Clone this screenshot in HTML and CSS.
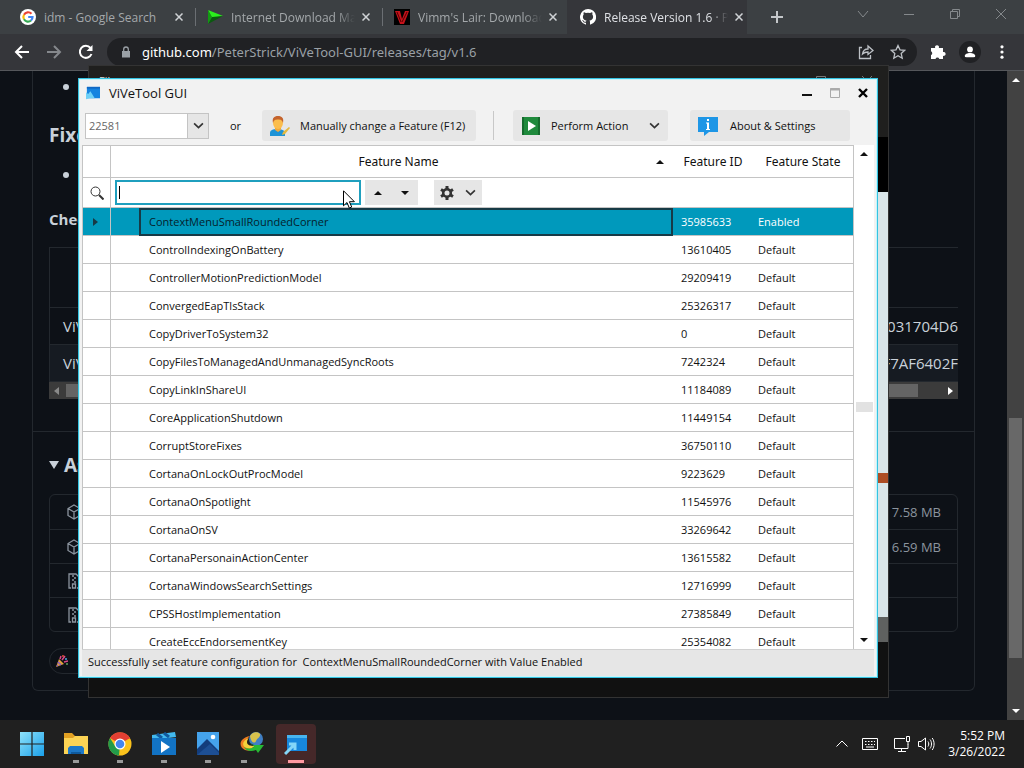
FILE: index.html
```html
<!DOCTYPE html>
<html lang="en">
<head>
  <meta charset="UTF-8">
  <meta name="viewport" content="width=device-width, initial-scale=1.0">
  <title>ViVeTool GUI</title>
  <link rel="stylesheet" href="styles.css">
</head>
<body>
  <header class="browser">
    <div class="tabs">
      <div class="tab">
        <svg class="favicon" viewBox="0 0 16 16"><circle cx="8" cy="8" r="8" fill="#fff"/><g fill="none" stroke-width="2.2"><path d="M11.5 4.8A4.6 4.6 0 0 0 4 5.7" stroke="#ea4335"/><path d="M4 5.7a4.6 4.6 0 0 0 0 4.6" stroke="#fbbc05"/><path d="M4 10.3a4.6 4.6 0 0 0 7 1.2" stroke="#34a853"/><path d="M8.2 8h4.3a4.6 4.6 0 0 1-1.5 3.5" stroke="#4285f4"/></g></svg>
        <span class="tab-title">idm - Google Search</span>
        <button class="tab-close" aria-label="Close tab"><svg viewBox="0 0 8 8"><path d="M0.5 0.5l7 7M7.5 0.5l-7 7"/></svg></button>
      </div>
      <div class="tab">
        <svg class="favicon" viewBox="0 0 16 16"><path d="M1 1l15 6-11 2z" fill="#2bf01d"/><path d="M1 15l15-8-11 1z" fill="#0b5a10"/><path d="M1 1v14l4-7z" fill="#129a12"/></svg>
        <span class="tab-title fade">Internet Download Manager</span>
        <button class="tab-close" aria-label="Close tab"><svg viewBox="0 0 8 8"><path d="M0.5 0.5l7 7M7.5 0.5l-7 7"/></svg></button>
      </div>
      <div class="tab last">
        <svg class="favicon" viewBox="0 0 16 16"><path d="M0 0h16v16H0z" fill="#000"/><path d="M1 2h5l2 8 3-8h4l-5 13H6z" fill="#c3121b"/><path d="M3 3l4 10M13 3L8 13" stroke="#500" fill="none"/></svg>
        <span class="tab-title fade">Vimm's Lair: Download</span>
        <button class="tab-close" aria-label="Close tab"><svg viewBox="0 0 8 8"><path d="M0.5 0.5l7 7M7.5 0.5l-7 7"/></svg></button>
      </div>
      <div class="tab active">
        <svg class="favicon" viewBox="0 0 16 16"><path fill="#fff" d="M8 0a8 8 0 0 0-2.5 15.6c.4.1.5-.2.5-.4v-1.500c-2.200.5-2.700-.9-2.700-.9-.4-.9-.9-1.200-.9-1.200-.7-.5.1-.5.1-.5.8.1 1.200.8 1.200.8.7 1.200 1.900.9 2.300.7.1-.5.3-.9.5-1.100-1.800-.2-3.600-.9-3.600-4 0-.9.3-1.600.8-2.100-.1-.2-.4-1 .1-2.100 0 0 .7-.2 2.200.8a7.500 7.500 0 0 1 4 0c1.500-1 2.200-.8 2.200-.8.4 1.100.2 1.900.1 2.100.5.600.8 1.300.8 2.100 0 3.100-1.900 3.800-3.700 4 .3.3.6.8.6 1.500v2.200c0 .2.1.5.6.4A8 8 0 0 0 8 0z"/></svg>
        <span class="tab-title fade">Release Version 1.6 · PeterStrick</span>
        <button class="tab-close" aria-label="Close tab"><svg viewBox="0 0 8 8"><path d="M0.5 0.5l7 7M7.5 0.5l-7 7"/></svg></button>
      </div>
      <button class="new-tab" aria-label="New tab"><svg viewBox="0 0 12 12"><path d="M6 0v12M0 6h12"/></svg></button>
      <div class="caption">
        <button aria-label="Search tabs"><svg viewBox="0 0 12 12"><path d="M1 3l5 6 5-6"/></svg></button>
        <button aria-label="Minimize"><svg viewBox="0 0 12 12"><path d="M1 6.500h10"/></svg></button>
        <button aria-label="Restore"><svg viewBox="0 0 12 12"><path d="M1.500 3.500h7v7h-7zM3.500 3.500v-2h7v7h-2"/></svg></button>
        <button aria-label="Close"><svg viewBox="0 0 12 12"><path d="M1 1l10 10M11 1L1 11"/></svg></button>
      </div>
    </div>
    <div class="toolbar">
      <button class="nav" aria-label="Back"><svg viewBox="0 0 16 16"><path d="M15 8H2M8 2L2 8l6 6"/></svg></button>
      <button class="nav off" aria-label="Forward"><svg viewBox="0 0 16 16"><path d="M1 8h13M8 2l6 6-6 6"/></svg></button>
      <button class="nav" aria-label="Reload"><svg viewBox="0 0 16 16"><path d="M13.500 10A6 6 0 1 1 12.500 4"/><path d="M14.500 1v6h-6z" fill="#fff" stroke="none"/></svg></button>
      <div class="address">
        <svg class="lock" viewBox="0 0 10 12"><path d="M1 5h8v6.500H1z" fill="#9aa0a6"/><path d="M2.700 5V3.300a2.300 2.300 0 0 1 4.600 0V5" fill="none" stroke="#9aa0a6" stroke-width="1.300"/></svg>
        <span class="url"><b>github.com</b>/PeterStrick/ViVeTool-GUI/releases/tag/v1.6</span>
        <button class="tool" aria-label="Share"><svg viewBox="0 0 16 16"><path d="M4 3.500H1.500v11h11V11M4.500 10c.5-3.500 2.500-5 5.500-5V2l5 4.500-5 4V8c-2.500 0-4 .5-5.500 2z"/></svg></button>
        <button class="tool" aria-label="Bookmark"><svg viewBox="0 0 16 16"><path d="M8 1.500l2 4.300 4.700.5-3.500 3.200 1 4.700L8 11.800l-4.200 2.400 1-4.700-3.500-3.200 4.700-.5z"/></svg></button>
      </div>
      <button class="tool" aria-label="Extensions"><svg viewBox="0 0 16 16"><path fill="#fff" stroke="none" d="M1 4h4.200a2 2 0 1 1 3.600 0H13v4a2 2 0 1 1 0 3.800V15H9.300a2 2 0 0 0-3.800 0H1v-4a2 2 0 0 0 0-3.700z"/></svg></button>
      <button class="tool profile" aria-label="Profile"><svg viewBox="0 0 16 16"><circle cx="8" cy="5" r="3.300" fill="#fff" stroke="none"/><path fill="#fff" stroke="none" d="M2 14v-1.500C2 10 5 9 8 9s6 1 6 3.500V14z"/></svg></button>
      <button class="tool menu" aria-label="Menu"><svg viewBox="0 0 16 16"><g fill="#fff" stroke="none"><circle cx="8" cy="2.800" r="1.600"/><circle cx="8" cy="8" r="1.600"/><circle cx="8" cy="13.200" r="1.600"/></g></svg></button>
    </div>
  </header>

  <main class="viewport">
    <article class="release">
      <section class="notes">
        <ul><li></li></ul>
        <h2>Fixed</h2>
        <ul><li></li></ul>
        <h3>Checksums</h3>
        <table class="sums">
          <tr><th></th><th></th></tr>
          <tr><td>ViVeTool</td><td class="hash">031704D6</td></tr>
          <tr class="alt"><td>ViVeTool</td><td class="hash">F7AF6402F</td></tr>
        </table>
        <div class="hscroll"><span class="arrow-left"></span><span class="hthumb"></span><span class="arrow-right"></span></div>
      </section>
      <section class="assets">
        <h2><span class="tri"></span>Assets</h2>
        <ul class="files">
          <li><svg viewBox="0 0 16 16"><path d="M8 1l6 3.500v7L8 15l-6-3.500v-7zM2 4.500L8 8l6-3.500M8 8v7"/></svg><span>7.58 MB</span></li>
          <li><svg viewBox="0 0 16 16"><path d="M8 1l6 3.500v7L8 15l-6-3.500v-7zM2 4.500L8 8l6-3.500M8 8v7"/></svg><span>6.59 MB</span></li>
          <li><svg viewBox="0 0 16 16"><path d="M5 15H3V1h7l3 3v11h-2M6 3h2M8 5h2M6 7h2M8 9h2M6.500 11h3v4h-3z"/></svg></li>
          <li><svg viewBox="0 0 16 16"><path d="M5 15H3V1h7l3 3v11h-2M6 3h2M8 5h2M6 7h2M8 9h2M6.500 11h3v4h-3z"/></svg></li>
        </ul>
        <button class="reaction" aria-label="Hooray">
          <svg viewBox="0 0 12 12"><path d="M0 12l3-8 5 5z" fill="#e0a03a"/><path d="M2 7l3 3M1 10l1 1" stroke="#8a5ac8" stroke-width="1.500"/><path d="M4 4l1-3M6 5l3-4M8 7l4-1" stroke="#d84a8a" stroke-width="1.500"/><circle cx="10" cy="4" r="1" fill="#4aa3e0"/><circle cx="7" cy="1" r="1" fill="#e0523a"/><circle cx="11" cy="9" r="1" fill="#5aa05a"/></svg>
        </button>
      </section>
    </article>
    <div class="vscroll"><span class="arrow-up"></span><span class="vthumb"></span><span class="arrow-down"></span></div>
  </main>

  <div class="window back-window">
    <div class="back-title">
      <span>File</span>
      <svg viewBox="0 0 60 12"><path d="M3.500 1.500h9v9h-9zM49 1l10 10M59 1L49 11"/></svg>
    </div>
    <div class="back-black"></div>
    <div class="back-light"><span></span></div>
    <div class="back-grey"></div>
    <div class="back-foot"></div>
  </div>

  <div class="window app">
    <div class="title-bar">
      <svg class="app-icon" viewBox="0 0 16 14"><path d="M1 0h15v13H1z" fill="#1583e0"/><path d="M1 0h15v2H1z" fill="#1068c4"/><path d="M0 14V6l2.500 2L5 5l5 8H4z" fill="#6fd0f7"/></svg>
      <h1>ViVeTool GUI</h1>
      <button aria-label="Minimize"><svg viewBox="0 0 12 12"><path d="M1 8h10" stroke="#111" stroke-width="2"/></svg></button>
      <button aria-label="Maximize"><svg viewBox="0 0 12 12"><path d="M1.500 1.500h9v9h-9z" stroke="#aaa"/><path d="M1 2.500h10" stroke="#aaa" stroke-width="2"/></svg></button>
      <button aria-label="Close"><svg viewBox="0 0 12 12"><path d="M2 2l8 8M10 2l-8 8" stroke="#000" stroke-width="2.400"/></svg></button>
    </div>

    <div class="commands">
      <div class="build">
        <select aria-label="Build"><option>22581</option></select>
        <svg class="chevron" viewBox="0 0 10 10"><path d="M1 3l4 4 4-4"/></svg>
      </div>
      <span class="or">or</span>
      <button class="command manual">
        <svg class="cmd-icon" viewBox="0 0 20 20"><path d="M0 20v-3c0-3 3-4 7-4s8 1 8 4v3z" fill="#1d93d6"/><path d="M5 11h6v3l-3 2-3-2z" fill="#f0a83a"/><ellipse cx="8" cy="7" rx="5" ry="6" fill="#fbbd4c"/><path d="M3 7C2 2 4 0 8 0s6 2 5 7c-1-3-2-3.500-5-3.500S4 4 3 7z" fill="#c4632c"/><path d="M12 19l1-3 6-5 1 1-5 6z" fill="#e5b93c"/></svg>
        <span>Manually change a Feature (F12)</span>
      </button>
      <span class="divider"></span>
      <button class="command perform">
        <svg class="cmd-icon" viewBox="0 0 20 20"><path d="M1 1h18v18H1z" fill="#1f8a3c"/><path d="M1 1h2v18H1zM17 1h2v18h-2z" fill="#156b2d"/><path d="M7 5l8 5-8 5z" fill="#fff"/></svg>
        <span>Perform Action</span>
        <svg class="chevron" viewBox="0 0 10 10"><path d="M1 3l4 4 4-4"/></svg>
      </button>
      <button class="command about">
        <svg class="cmd-icon" viewBox="0 0 20 20"><path d="M0 1h20v15h-9l-5 4v-4H0z" fill="#1e96e6"/><path d="M9 3h2v2H9zM8 6.500h3V13h1v1H8v-1h1V7.500H8z" fill="#fff"/></svg>
        <span>About &amp; Settings</span>
      </button>
    </div>

    <div class="grid-area">
      <div class="grid">
        <table class="features">
          <colgroup><col class="c-mark"><col class="c-indent"><col><col class="c-id"><col class="c-state"></colgroup>
          <thead>
            <tr class="head"><th class="mark"></th><th colspan="2"><div class="name-head"><span>Feature Name</span><i class="sort"></i></div></th><th>Feature ID</th><th>Feature State</th></tr>
            <tr class="filter">
              <td class="mark"><svg class="lens" viewBox="0 0 14 14"><circle cx="5.500" cy="5.500" r="4.500"/><path d="M9 9l4.500 4.500" stroke-width="2"/></svg></td>
              <td colspan="4">
                <div class="search">
                  <input type="text" aria-label="Search">
                  <div class="pair"><button aria-label="Previous"><i class="up"></i></button><button aria-label="Next"><i class="down"></i></button></div>
                  <button class="options" aria-label="Options">
                    <svg class="gear" viewBox="0 0 14 14"><circle cx="7" cy="7" r="3.800" stroke-width="2.600"/><path d="M7 0v3M7 11v3M1 3.500L3.500 5M10.500 9l2.500 1.500M1 10.500L3.500 9M10.500 5L13 3.500" stroke-width="3"/></svg>
                    <svg class="chevron" viewBox="0 0 10 10"><path d="M1 3l4 4 4-4"/></svg>
                  </button>
                </div>
              </td>
            </tr>
          </thead>
          <tbody>
            <tr class="selected"><td class="mark"><i class="current"></i></td><td></td><td class="name">ContextMenuSmallRoundedCorner</td><td>35985633</td><td>Enabled</td></tr>
            <tr><td class="mark"></td><td></td><td class="name">ControlIndexingOnBattery</td><td>13610405</td><td>Default</td></tr>
            <tr><td class="mark"></td><td></td><td class="name">ControllerMotionPredictionModel</td><td>29209419</td><td>Default</td></tr>
            <tr><td class="mark"></td><td></td><td class="name">ConvergedEapTlsStack</td><td>25326317</td><td>Default</td></tr>
            <tr><td class="mark"></td><td></td><td class="name">CopyDriverToSystem32</td><td>0</td><td>Default</td></tr>
            <tr><td class="mark"></td><td></td><td class="name">CopyFilesToManagedAndUnmanagedSyncRoots</td><td>7242324</td><td>Default</td></tr>
            <tr><td class="mark"></td><td></td><td class="name">CopyLinkInShareUI</td><td>11184089</td><td>Default</td></tr>
            <tr><td class="mark"></td><td></td><td class="name">CoreApplicationShutdown</td><td>11449154</td><td>Default</td></tr>
            <tr><td class="mark"></td><td></td><td class="name">CorruptStoreFixes</td><td>36750110</td><td>Default</td></tr>
            <tr><td class="mark"></td><td></td><td class="name">CortanaOnLockOutProcModel</td><td>9223629</td><td>Default</td></tr>
            <tr><td class="mark"></td><td></td><td class="name">CortanaOnSpotlight</td><td>11545976</td><td>Default</td></tr>
            <tr><td class="mark"></td><td></td><td class="name">CortanaOnSV</td><td>33269642</td><td>Default</td></tr>
            <tr><td class="mark"></td><td></td><td class="name">CortanaPersonainActionCenter</td><td>13615582</td><td>Default</td></tr>
            <tr><td class="mark"></td><td></td><td class="name">CortanaWindowsSearchSettings</td><td>12716999</td><td>Default</td></tr>
            <tr><td class="mark"></td><td></td><td class="name">CPSSHostImplementation</td><td>27385849</td><td>Default</td></tr>
            <tr><td class="mark"></td><td></td><td class="name">CreateEccEndorsementKey</td><td>25354082</td><td>Default</td></tr>
          </tbody>
        </table>
      </div>
      <div class="grid-scroll"><i class="up"></i><span></span><i class="down"></i></div>
    </div>
    <div class="status">Successfully set feature configuration for &nbsp;ContextMenuSmallRoundedCorner with Value Enabled</div>
  </div>

  <svg class="pointer" viewBox="0 0 12 19"><path d="M.5.8v15l3.500-3.300 2.300 5.500 2.400-1-2.300-5.300h5z" fill="#fff" stroke="#000"/></svg>

  <footer class="taskbar">
    <div class="apps">
      <button aria-label="Start"><svg viewBox="0 0 24 24"><defs><linearGradient id="win" x2="1" y2="1"><stop stop-color="#8fe3fb"/><stop offset="1" stop-color="#1aa0ea"/></linearGradient></defs><path fill="url(#win)" d="M0 0h11.400v11.400H0zM12.600 0H24v11.400H12.600zM0 12.600h11.400V24H0zM12.600 12.600H24V24H12.600z"/></svg></button>
      <button class="running" aria-label="File Explorer"><svg viewBox="0 0 24 24"><path d="M0 1h8l3 3h13v18H0z" fill="#e2a022"/><path d="M0 6h9l2-2h13v18H0z" fill="#fcd354"/><path d="M4 22v-6l2-2h12l2 2v6z" fill="#1d78c8"/><path d="M7 20h10v2H7z" fill="#0f5a9e"/></svg></button>
      <button class="running" aria-label="Chrome"><svg viewBox="0 0 24 24"><circle cx="12" cy="12" r="11.500" fill="#fbc21c"/><path d="M12 12L2 6A11.500 11.500 0 0 1 22 6z" fill="#e33f33"/><path d="M12 6.500h10.200L20 5H12z" fill="#e33f33"/><path d="M12 12l-1 11.500A11.500 11.500 0 0 1 2 6l5 8z" fill="#229b4a"/><circle cx="12" cy="12" r="5.500" fill="#fff"/><circle cx="12" cy="12" r="4.300" fill="#4486f0"/></svg></button>
      <button class="running" aria-label="Movies &amp; TV"><svg viewBox="0 0 24 24"><path d="M0 3l23-3 1 5-24 3z" fill="#42b9ee"/><path d="M5 2l5 4M12 1l5 4" stroke="#125a9e" stroke-width="3"/><path d="M0 6h24v17H0z" fill="#1273c4"/><path d="M9 9l9 6-9 6z" fill="#fff"/></svg></button>
      <button class="running" aria-label="Photos"><svg viewBox="0 0 24 24"><path d="M1 0h22v23H1z" fill="#45a3ec"/><path d="M1 17l10-10 12 12v4H1z" fill="#133d7c"/><path d="M1 23l13-11 9 9v2z" fill="#1d4f94"/><circle cx="17" cy="5" r="2.300" fill="#fff"/></svg></button>
      <button class="running grouped" aria-label="Internet Download Manager"><svg viewBox="0 0 24 24"><path d="M10 4C-1 6-2 15 5 18c5 2 10 0 11-3-5 2-9 1-10-2s1-6 4-9z" fill="#ee7c20"/><path d="M9 6C1 9 2 15 7 16c3 1 6 0 8-2-5 0-8-1-8-4 0-2 1-3 2-4z" fill="#f5d13b"/><circle cx="16" cy="7" r="7" fill="#3f7fc4"/><path d="M10 4c2-4 8-5 10-2 1 3-3 4-4 7s-5 2-6-5z" fill="#d7c14b"/><path d="M10 11c3 1 4 3 8 2l-4 1a7 7 0 0 1-4-3z" fill="#1c5a2c"/><path d="M4 15c3 2 6 2 10 0l-1-2 11 0-6 8-2-3C11 20 6 19 4 15z" fill="#27b934"/></svg></button>
      <button class="running current-app" aria-label="ViVeTool GUI"><svg viewBox="0 0 24 24"><path d="M3 3h20v16H3z" fill="#1787dd"/><path d="M3 3h20v3H3z" fill="#48b4ef"/><path d="M1 22l9-9M5 12h6v6" fill="none" stroke="#84d6f8" stroke-width="3"/></svg></button>
    </div>
    <div class="tray">
      <svg class="tray-icon" viewBox="0 0 18 18"><path d="M3.500 11.500L9 6l5.500 5.500"/></svg>
      <svg class="tray-icon" viewBox="0 0 18 18"><path d="M1.500 3.500h15v11h-15zM5 12h8"/><path d="M4 6.500h10M4 9.500h10" stroke-dasharray="1.500 1.500"/></svg>
      <svg class="tray-icon net" viewBox="0 0 18 18"><path d="M12 3.500H1.500v10H15V9M5 16.500h8M8.500 13.500v3M13.500 1.500h3v5h-3zM15 6.500v3"/></svg>
      <svg class="tray-icon sound" viewBox="0 0 18 18"><path d="M1.500 6.500H4L8.500 3v12L4 11.500H1.500zM11 6.500c1 1.500 1 3.500 0 5M13 4.500c2 2.500 2 6.500 0 9M15.200 3c2.500 3.500 2.500 8.500 0 12"/></svg>
      <div class="clock"><span>5:52 PM</span><span>3/26/2022</span></div>
    </div>
  </footer>
</body>
</html>
```
FILE: styles.css
```css
* {
  box-sizing: border-box;
}

body {
  margin: 0;
  height: 100vh;
  display: flex;
  flex-direction: column;
  overflow: hidden;
  background: #0d1117;
  color: #c9d1d9;
  font-family: "Open Sans", "Noto Sans", sans-serif;
  font-size: 11px;
}

button {
  display: flex;
  align-items: center;
  justify-content: center;
  padding: 0;
  border: 0;
  background: none;
  color: inherit;
  font: inherit;
}

svg {
  display: block;
  flex: none;
}

h1, h2, h3, ul {
  margin: 0;
  padding: 0;
}

/* Browser */
.browser {
  background: #35363a;
  border-bottom: 1px solid #55575b;
}

.tabs {
  display: flex;
  height: 34px;
  background: #3c4043;
}

.tab {
  display: flex;
  align-items: center;
  width: 187px;
  padding: 0 0 0 20px;
  color: #a4a8ab;
  font-size: 12px;
  background: linear-gradient(#6b6f73, #6b6f73) 8px center / 1px 18px no-repeat;
}

.tab:first-child {
  background: none;
}

.tab.active {
  width: 186px;
  padding: 0 0 0 19px;
  background: linear-gradient(#35363a, #35363a) right / 180px 100% no-repeat;
  color: #dfe1e5;
}

.favicon {
  width: 16px;
  height: 16px;
  margin-right: 8px;
}

.tab-title {
  flex: 1;
  overflow: hidden;
  white-space: nowrap;
}

.fade {
  -webkit-mask-image: linear-gradient(to right, #000 85%, transparent);
  mask-image: linear-gradient(to right, #000 85%, transparent);
}

.tab-close {
  width: 16px;
  height: 16px;
  margin-left: 3px;
}

.tab-close svg {
  width: 8px;
  height: 8px;
  fill: none;
  stroke: #d0d3d6;
  stroke-width: 1.5;
}

.new-tab {
  width: 60px;
}

.new-tab svg {
  width: 12px;
  height: 12px;
  stroke: #c4c7ca;
  stroke-width: 2;
}

.caption {
  display: flex;
  flex: 1;
  justify-content: flex-end;
  padding-bottom: 6px;
}

.caption button {
  width: 46px;
}

.caption svg {
  width: 12px;
  height: 12px;
  fill: none;
  stroke: #85898c;
}

.toolbar {
  display: flex;
  align-items: center;
  height: 36px;
  padding: 0 6px;
}

.nav {
  width: 32px;
}

.nav svg,
.tool svg {
  width: 16px;
  height: 16px;
  fill: none;
  stroke: #fff;
  stroke-width: 2;
}

.nav.off svg {
  stroke: #85888c;
}

.address {
  display: flex;
  flex: 1;
  align-items: center;
  height: 28px;
  margin: 0 5px;
  padding: 0 3px 0 14px;
  border-radius: 14px;
  background: #202124;
}

.lock {
  width: 10px;
  height: 12px;
  margin-right: 11px;
}

.url {
  flex: 1;
  color: #9aa0a6;
  font-family: "Noto Sans", "Open Sans", sans-serif;
  font-size: 13px;
}

.url b {
  color: #fff;
  font-weight: normal;
}

.tool {
  width: 32px;
}

.address .tool svg {
  stroke: #bdc1c6;
  stroke-width: 1.3;
}

.profile svg {
  width: 22px;
  height: 22px;
  padding: 4px;
  border-radius: 50%;
  background: #202124;
}

/* Page behind the windows */
.viewport {
  display: flex;
  flex: 1;
  min-height: 0;
}

.release {
  flex: 1;
  align-self: flex-start;
  margin: 0 32px;
  border: 1px solid #23282e;
  border-top: 0;
  border-radius: 0 0 6px 6px;
}

.notes {
  padding: 0 16px 32px;
  border-bottom: 1px solid #23282e;
}

.notes ul {
  height: 30px;
  padding: 3px 0 0 32px;
  font-size: 16px;
}

.notes li {
  line-height: 24px;
}

.notes h2 {
  height: 58px;
  padding-top: 20px;
  font-size: 19px;
  line-height: 28px;
}

.notes h3 {
  padding: 18px 0 16px;
  font-size: 15px;
  line-height: 24px;
}

.sums {
  width: 100%;
  border-collapse: collapse;
  border: 1px solid #23282e;
  border-width: 1px 0 0 1px;
  font-size: 15px;
}

.sums tr {
  height: 37px;
  border-bottom: 1px solid #23282e;
}

.sums tr:first-child {
  height: 60px;
}

.sums .alt {
  background: #161b22;
}

.sums td {
  padding: 0 0 0 13px;
}

.sums .hash {
  padding: 0;
  text-align: right;
}

.hscroll {
  display: flex;
  align-items: center;
  height: 17px;
  background: #3b3b3b;
}

.hthumb {
  width: 852px;
  height: 13px;
  margin: 0 auto 0 2px;
  background: #646464;
}

.arrow-left,
.arrow-right {
  margin: 0 5px;
  border: 4px solid transparent;
}

.arrow-left {
  border-right: 5px solid #8a8a8a;
  border-left: 0;
}

.arrow-right {
  border-left: 5px solid #fff;
  border-right: 0;
}

.assets {
  padding: 18px 16px 16px;
}

.assets h2 {
  display: flex;
  align-items: center;
  height: 30px;
  margin-bottom: 14px;
  font-size: 19px;
}

.tri {
  margin-right: 5px;
  border: 5px solid transparent;
  border-top: 8px solid #c9d1d9;
  border-bottom: 0;
}

.files {
  border: 1px solid #23282e;
  border-radius: 6px;
  list-style: none;
}

.files li {
  display: flex;
  align-items: center;
  justify-content: space-between;
  height: 34px;
  padding: 0 16px;
  color: #8b949e;
  font-size: 13px;
}

.files li + li {
  border-top: 1px solid #23282e;
}

.files svg {
  width: 16px;
  height: 16px;
  fill: none;
  stroke: #8b949e;
  stroke-width: 1.3;
}

.reaction {
  justify-content: flex-start;
  width: 52px;
  height: 26px;
  margin-top: 16px;
  padding-left: 6px;
  border: 1px solid #23282e;
  border-radius: 13px;
}

.reaction svg {
  width: 12px;
  height: 12px;
}

.vscroll {
  display: flex;
  flex-direction: column;
  align-items: center;
  width: 17px;
  padding: 7px 0;
  background: #424242;
}

.vthumb {
  width: 13px;
  height: 240px;
  margin: auto 0 51px;
  background: #686868;
}

.arrow-up,
.arrow-down {
  border: 4px solid transparent;
}

.arrow-up {
  border-bottom: 4px solid #fff;
  border-top: 0;
}

.arrow-down {
  border-top: 4px solid #fff;
  border-bottom: 0;
}

/* Desktop windows */
.window {
  position: absolute;
  display: flex;
  flex-direction: column;
}

.back-window {
  left: 88px;
  top: 65px;
  width: 801px;
  height: 633px;
  border: 1px solid #333;
  background: #111;
}

.back-title {
  display: flex;
  align-items: flex-start;
  justify-content: space-between;
  height: 71px;
  padding: 9px 15px 0 10px;
  background: #1f1f1e;
  color: #ddd;
  line-height: 12px;
}

.back-title svg {
  width: 60px;
  height: 12px;
  fill: none;
  stroke: #777;
}

.back-black {
  height: 55px;
  background: #000;
}

.back-light {
  display: flex;
  align-items: flex-end;
  height: 425px;
  padding-bottom: 134px;
  background: #d9e5e8;
}

.back-light span {
  flex: 1;
  height: 10px;
  background: #ad4d24;
}

.back-grey {
  height: 25px;
  background: #5f6160;
}

.back-foot {
  flex: 1;
  background: #111;
}

.app {
  left: 78px;
  top: 78px;
  width: 800px;
  height: 600px;
  border: 1px solid #35c3e2;
  box-shadow: inset 0 0 0 1px #c6f5fa;
  padding: 1px 3px;
  background: #f2f2f2;
  color: #111;
}

.title-bar {
  display: flex;
  align-items: center;
  height: 26px;
  padding-left: 4px;
}

.title-bar h1 {
  flex: 1;
  font-size: 13px;
  font-weight: normal;
}

.app-icon {
  width: 14px;
  height: 14px;
  margin-right: 9px;
}

.title-bar button {
  width: 28px;
}

.title-bar button:last-child {
  margin-right: -3px;
}

.title-bar button svg {
  width: 12px;
  height: 12px;
  fill: none;
}

.commands {
  display: flex;
  align-items: center;
  height: 39px;
  padding-left: 3px;
}

.build {
  display: flex;
  align-items: center;
  width: 124px;
  height: 26px;
  border: 1px solid #c4c4c4;
  background: linear-gradient(#c4c4c4, #c4c4c4) right 20px top / 1px 100% no-repeat, linear-gradient(#e6e6e6, #e6e6e6) right / 20px 100% no-repeat, #fff;
}

.build select {
  flex: 1;
  height: 24px;
  padding: 0 0 0 3px;
  border: 0;
  appearance: none;
  background: none;
  color: #666;
  font: inherit;
}

.build .chevron {
  margin: 0 4px 0 0;
}

.chevron {
  width: 11px;
  height: 11px;
  fill: none;
  stroke: #333;
  stroke-width: 1.5;
}

.or {
  width: 53px;
  text-align: center;
}

.command {
  justify-content: flex-start;
  height: 31px;
  padding: 0 8px;
  border-radius: 3px;
  background: #e6e6e6;
  white-space: nowrap;
}

.cmd-icon {
  width: 20px;
  height: 20px;
  margin-right: 10px;
}

.manual {
  width: 214px;
}

.divider {
  width: 1px;
  height: 29px;
  margin: 0 19px 0 17px;
  background: #c8c8c8;
}

.perform {
  width: 155px;
}

.perform .chevron {
  margin-left: auto;
}

.about {
  width: 160px;
  margin-left: 22px;
}

.about .cmd-icon {
  margin-right: 12px;
}

.grid-area {
  display: flex;
  flex: 1;
  min-height: 0;
  background: #fff;
}

.grid {
  flex: 1;
  overflow: hidden;
  border: 1px solid #c4c4c4;
  border-bottom: 0;
}

.features {
  width: 100%;
  table-layout: fixed;
  border-collapse: separate;
  border-spacing: 0;
}

.c-mark,
.c-indent {
  width: 28px;
}

.c-id {
  width: 80px;
}

.c-state {
  width: 100px;
}

.features th,
.features td {
  height: 28px;
  padding: 0 0 0 5px;
  border-bottom: 1px solid #c4c4c4;
  text-align: left;
}

.features td:nth-child(4) {
  padding-left: 8px;
}

.features .head th {
  height: 32px;
  padding: 0;
  font-family: "Noto Sans", "Open Sans", sans-serif;
  font-size: 12px;
  font-weight: normal;
  text-align: center;
}

.features .filter td {
  height: 30px;
  padding: 0 4px;
}

.features .mark {
  border-right: 1px solid #c4c4c4;
}

.features td.name {
  padding-left: 10px;
}

.name-head {
  display: flex;
  align-items: center;
  padding: 0 9px 0 30px;
}

.name-head span {
  flex: 1;
}

.lens {
  width: 14px;
  height: 14px;
  margin: 0 auto;
  fill: none;
  stroke: #333;
}

.search {
  display: flex;
  align-items: center;
}

/* the gradient is the text cursor */
.search input {
  width: 246px;
  height: 25px;
  padding: 0 2px;
  border: 2px solid #1f9fbe;
  outline: 0;
  background: linear-gradient(#000, #000) 2px center / 1px 13px no-repeat, #fff;
  font: inherit;
  font-size: 12px;
}

.pair {
  display: flex;
  width: 53px;
  margin: 0 16px 0 4px;
  background: #e6e6e6;
}

.pair button {
  flex: 1;
  height: 25px;
}

.options {
  width: 48px;
  height: 25px;
  gap: 11px;
  background: #e6e6e6;
}

.gear {
  width: 14px;
  height: 14px;
  fill: none;
  stroke: #333;
}

.up,
.down,
.sort {
  border: 4px solid transparent;
}

.up,
.sort {
  border-bottom: 4px solid #111;
  border-top: 0;
}

.down {
  border-top: 4px solid #111;
  border-bottom: 0;
}

.selected td {
  background: #0099bc;
  color: #fff;
}

.features .selected .name {
  padding: 0 0 1px 8px;
  border: 2px solid #173a46;
  color: #06222c;
}

.current {
  display: block;
  width: 5px;
  margin-left: 5px;
  border: 4px solid transparent;
  border-left: 5px solid #173a46;
  border-right: 0;
}

.grid-scroll {
  display: flex;
  flex-direction: column;
  align-items: center;
  width: 20px;
  padding: 7px 0;
}

.grid-scroll span {
  width: 17px;
  height: 10px;
  margin: auto 0 226px;
  background: #e2e2e2;
}

.status {
  height: 27px;
  padding-left: 6px;
  border-top: 1px solid #d0d0d0;
  background: #e6e6e6;
  line-height: 24px;
}

.pointer {
  position: absolute;
  left: 343px;
  top: 190px;
  width: 12px;
  height: 19px;
}

/* Taskbar */
.taskbar {
  display: flex;
  justify-content: space-between;
  height: 48px;
  padding: 0 19px 0 12px;
  background: #202020;
  color: #fff;
}

.apps {
  display: flex;
  align-items: center;
  gap: 4px;
}

.apps button {
  width: 40px;
  height: 40px;
  border-radius: 4px;
}

.apps svg {
  width: 24px;
  height: 24px;
}

.apps .running {
  background: linear-gradient(#9a9a9a, #9a9a9a) center bottom 1px / 6px 3px no-repeat;
}

.apps .grouped {
  background-position: left 9px bottom 1px;
}

.apps .current-app {
  background: linear-gradient(#ff9aa2, #ff9aa2) center bottom 1px / 16px 3px no-repeat, #452829;
}

.tray {
  display: flex;
  align-items: center;
  gap: 10px;
}

.tray-icon {
  width: 18px;
  height: 18px;
  fill: none;
  stroke: #fff;
}

.net {
  margin-left: 4px;
}

.sound {
  margin-left: -4px;
}

.clock {
  display: flex;
  flex-direction: column;
  align-items: flex-end;
  width: 60px;
  font-size: 12px;
  line-height: 16px;
}
```
